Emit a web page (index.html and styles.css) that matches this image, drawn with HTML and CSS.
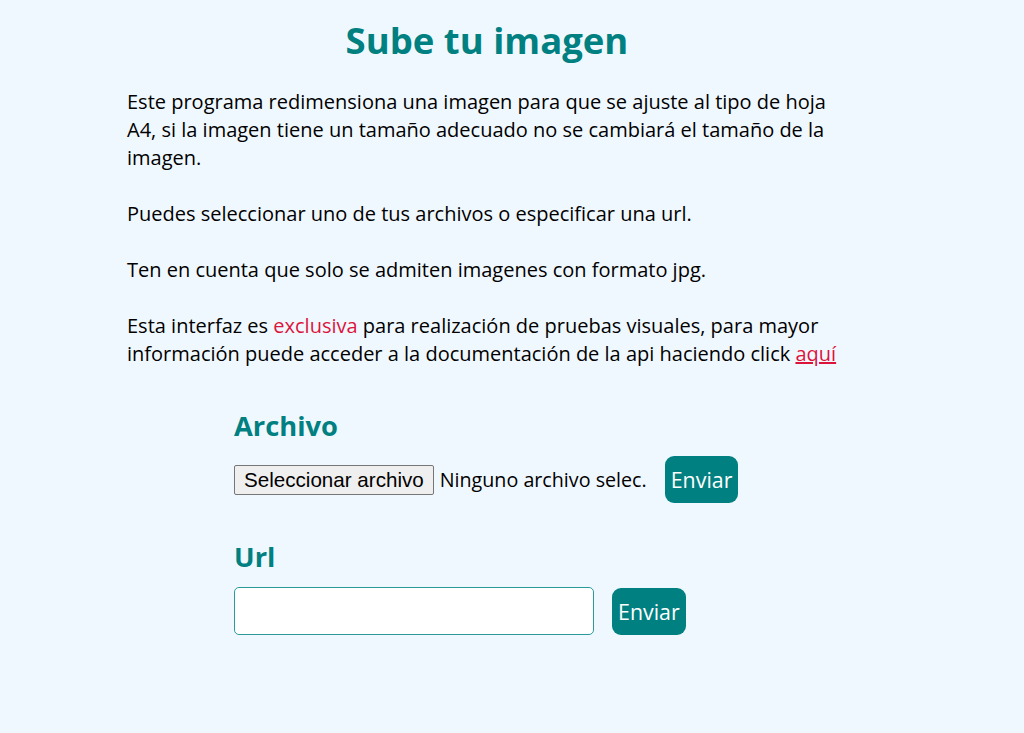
FILE: index.html
```html
<!DOCTYPE html>
<html lang="es">
<head>
<meta charset="utf-8">
<title>Sube tu imagen</title>
<link rel="stylesheet" href="styles.css">
</head>
<body>
<main class="page">
  <h1 class="title">Sube tu imagen</h1>
  <div class="intro">
    <p>Este programa redimensiona una imagen para que se ajuste al tipo de hoja A4, si la imagen tiene un tamaño adecuado no se cambiará el tamaño de la imagen.</p>
    <p>Puedes seleccionar uno de tus archivos o especificar una url.</p>
    <p>Ten en cuenta que solo se admiten imagenes con formato jpg.</p>
    <p>Esta interfaz es <span class="accent">exclusiva</span> para realización de pruebas visuales, para mayor información puede acceder a la documentación de la api haciendo click <a class="link" href="#">aquí</a></p>
  </div>
  <section class="forms">
    <form class="block">
      <h2 class="block-title">Archivo</h2>
      <div class="row">
        <label class="file">
          <span class="file-btn">Seleccionar archivo</span>
          <span class="file-name">Ninguno archivo selec.</span>
        </label>
        <button type="button" class="send">Enviar</button>
      </div>
    </form>
    <form class="block">
      <h2 class="block-title">Url</h2>
      <div class="row">
        <input type="text" class="url">
        <button type="button" class="send">Enviar</button>
      </div>
    </form>
  </section>
</main>
</body>
</html>
```
FILE: styles.css
```css
html, body {
  margin: 0;
  background: #f0f8ff;
}
body {
  font-family: "Open Sans", "Noto Sans", sans-serif;
  color: #000;
}
.page {
  width: 720px;
  padding: 0 0 0 127px;
}
.title {
  margin: 18px 0 0;
  text-align: center;
  color: #008080;
  font-size: 36.5px;
  line-height: 44px;
  font-weight: 700;
}
.intro {
  margin-top: 26px;
}
.intro p {
  margin: 0 0 28px;
  font-size: 20px;
  line-height: 28px;
}
.accent {
  color: #dc143c;
}
.link {
  color: #dc143c;
  text-decoration: underline;
}
.forms {
  padding-left: 107px;
  margin-top: 40px;
}
.block-title {
  margin: 0;
  color: #008080;
  font-size: 27.3px;
  line-height: 36px;
  font-weight: 700;
}
.block + .block {
  margin-top: 36px;
}
.row {
  display: flex;
  align-items: center;
  margin-top: 12px;
}
.file {
  display: flex;
  align-items: center;
}
.file-btn {
  font-family: "Liberation Sans", Arial, sans-serif;
  font-size: 20.6px;
  line-height: 28px;
  padding: 0 9px;
  background: #efefef;
  border: 1px solid #767676;
  border-radius: 2px;
  color: #000;
}
.file-name {
  margin-left: 6px;
  font-size: 19.7px;
}
.send {
  margin-left: 18px;
  font-family: inherit;
  font-size: 21.4px;
  color: #fff;
  background: #008080;
  border: none;
  border-radius: 9px;
  height: 47px;
  padding: 0 6px;
}
.url {
  width: 360px;
  height: 48px;
  box-sizing: border-box;
  border: 1px solid #2a9a9a;
  border-radius: 5px;
  background: #fff;
  margin: 0;
}
```
